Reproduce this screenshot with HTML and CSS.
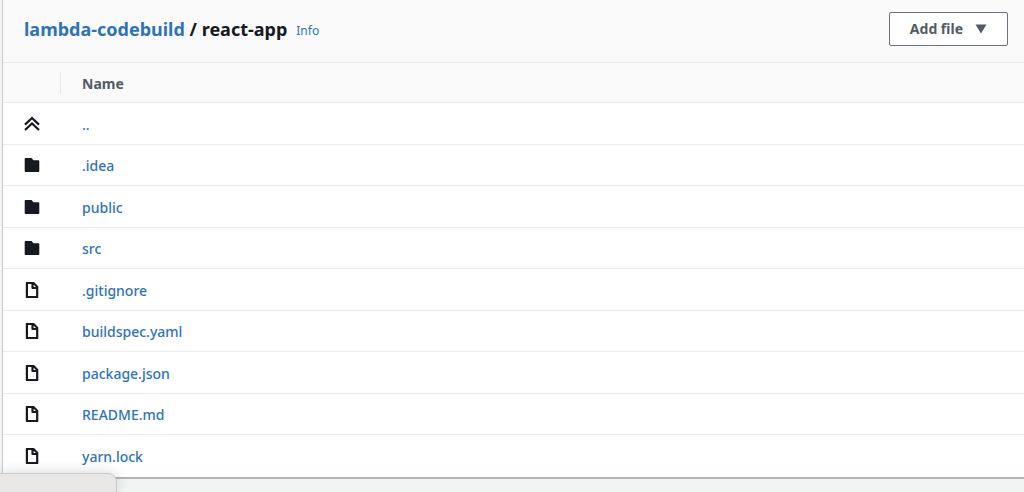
FILE: index.html
```html
<!DOCTYPE html>
<html lang="en">
<head>
<meta charset="utf-8">
<title>react-app</title>
<link rel="stylesheet" href="styles.css">
</head>
<body>
<svg class="sprite" aria-hidden="true">
  <symbol id="up" viewBox="0 0 16 16"><path d="M1 8.600 8 2l7 6.600M1 14 8 7.400l7 6.600" fill="none" stroke="#16191f" stroke-width="2.200"/></symbol>
  <symbol id="folder" viewBox="0 0 16 16"><path d="M1.500 1H7.500L9.500 3.200H14.500Q15.300 3.200 15.300 4V14Q15.300 15 14.500 15H1.500Q.700 15 .700 14V2Q.700 1 1.500 1Z" fill="#16191f"/></symbol>
  <symbol id="file" viewBox="0 0 16 16"><path d="M2.900 1H9.500L13.200 4.700V15H2.900ZM8.500 1V6H13" fill="none" stroke="#16191f" stroke-width="2.200" stroke-linejoin="round"/></symbol>
</svg>
<main class="panel">
  <header class="panel-header">
    <h1 class="title"><a href="#">lambda-codebuild</a> / react-app</h1>
    <a class="info" href="#">Info</a>
    <button class="add-file" type="button">Add file
      <svg class="caret" viewBox="0 0 12 10" aria-hidden="true"><path d="M.500 .500h11L6 9.500z" fill="#545b64"/></svg>
    </button>
  </header>
  <table class="files">
    <thead>
      <tr><th class="icon-col" aria-label="Type"></th><th>Name</th></tr>
    </thead>
    <tbody>
      <tr><td class="icon-col"><svg class="icon"><use href="#up"/></svg></td><td><a href="#">..</a></td></tr>
      <tr><td class="icon-col"><svg class="icon"><use href="#folder"/></svg></td><td><a href="#">.idea</a></td></tr>
      <tr><td class="icon-col"><svg class="icon"><use href="#folder"/></svg></td><td><a href="#">public</a></td></tr>
      <tr><td class="icon-col"><svg class="icon"><use href="#folder"/></svg></td><td><a href="#">src</a></td></tr>
      <tr><td class="icon-col"><svg class="icon"><use href="#file"/></svg></td><td><a href="#">.gitignore</a></td></tr>
      <tr><td class="icon-col"><svg class="icon"><use href="#file"/></svg></td><td><a href="#">buildspec.yaml</a></td></tr>
      <tr><td class="icon-col"><svg class="icon"><use href="#file"/></svg></td><td><a href="#">package.json</a></td></tr>
      <tr><td class="icon-col"><svg class="icon"><use href="#file"/></svg></td><td><a href="#">README.md</a></td></tr>
      <tr><td class="icon-col"><svg class="icon"><use href="#file"/></svg></td><td><a href="#">yarn.lock</a></td></tr>
    </tbody>
  </table>
</main>
<div class="status-bubble"></div>
</body>
</html>
```

FILE: styles.css
```css
* { box-sizing: border-box; }
body {
  margin: 0;
  min-height: 100vh;
  overflow: hidden;
  background: #f2f3f3;
  color: #16191f;
  font: 14px/20px "Noto Sans", "Open Sans", sans-serif;
}
a { color: #2e73b8; text-decoration: none; }
.sprite { position: absolute; width: 0; height: 0; }
.panel {
  margin-left: 2px;
  background: #fff;
  border-left: 1px solid #c8cccc;
  border-bottom: 2px solid #b2b7ba;
}
.panel-header {
  display: flex;
  align-items: center;
  height: 63px;
  padding: 0 16px 5px 21px;
  background: #fafafa;
  border-bottom: 1px solid #e6ebed;
}
.title { margin: 0; font-size: 18px; line-height: 24px; font-weight: 700; }
.info { margin-left: 9px; padding-top: 4px; font-size: 12px; }
.add-file {
  display: flex;
  align-items: center;
  gap: 12px;
  height: 34px;
  margin-left: auto;
  padding: 0 20px;
  background: #fff;
  border: 1px solid #6c727b;
  border-radius: 2px;
  color: #545b64;
  font: inherit;
  font-weight: 700;
}
.caret { width: 12px; height: 10px; }
.files { width: 100%; border-collapse: separate; border-spacing: 0; }
.files th {
  height: 40px;
  padding: 2px 21px 0;
  background: #fafafa;
  border-bottom: 1px solid #eaeded;
  color: #545b64;
  text-align: left;
}
.files th.icon-col {
  background: linear-gradient(#e3e7e8, #e3e7e8) right center / 1px 22px no-repeat #fafafa;
}
.files td { height: 41px; padding: 2px 21px 0; border-bottom: 1px solid #eaeded; font-weight: 500; }
.files tbody tr:nth-child(odd) td { height: 42px; }
.files tbody tr:last-child td { border-bottom: 0; }
.files .icon-col { width: 58px; }
.files td.icon-col { padding-top: 0; }
.icon { display: block; width: 16px; height: 16px; }
.status-bubble {
  position: fixed;
  left: 0;
  bottom: 0;
  width: 117px;
  height: 19px;
  background: #e9e8e6;
  border: solid #c9c9c7;
  border-width: 1px 1px 0 0;
  border-radius: 0 9px 0 0;
  box-shadow: 0 0 14px rgba(0, 0, 0, .16);
}
```
